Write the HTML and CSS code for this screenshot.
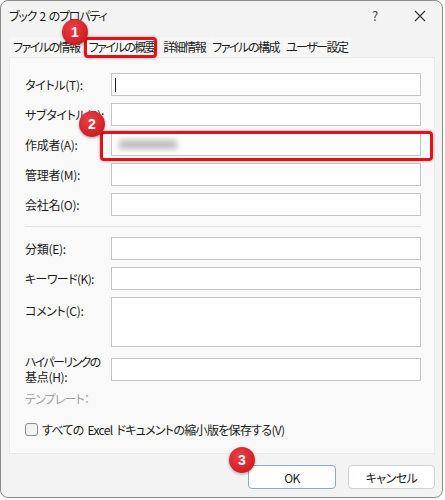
FILE: index.html
```html
<!DOCTYPE html>
<html lang="ja">
<head>
<meta charset="utf-8">
<link rel="stylesheet" href="styles.css">
</head>
<body>
<div class="window">
  <div class="titlebar">
    <span class="title">ブック 2 のプロパティ</span>
    <span class="help">?</span>
    <span class="close"><svg width="12" height="12" viewBox="0 0 12 12"><path d="M1 1 L11 11 M11 1 L1 11" stroke="#333" stroke-width="1.1" fill="none"/></svg></span>
  </div>
  <div class="tabs">
    <span class="tab">ファイルの情報</span>
    <span class="tab selected">ファイルの概要</span>
    <span class="tab">詳細情報</span>
    <span class="tab">ファイルの構成</span>
    <span class="tab">ユーザー設定</span>
  </div>
  <div class="panel">
    <div class="row"><label class="lbl">タイトル(T):</label><div class="field"><span class="caret"></span></div></div>
    <div class="row"><label class="lbl">サブタイトル(S):</label><div class="field"></div></div>
    <div class="row"><label class="lbl">作成者(A):</label><div class="field"><span class="blur"></span></div></div>
    <div class="row"><label class="lbl">管理者(M):</label><div class="field"></div></div>
    <div class="row"><label class="lbl">会社名(O):</label><div class="field"></div></div>
    <div class="sep"></div>
    <div class="row"><label class="lbl">分類(E):</label><div class="field"></div></div>
    <div class="row"><label class="lbl kana">キーワード(K):</label><div class="field"></div></div>
    <div class="row tall"><label class="lbl top">コメント(C):</label><div class="field"></div></div>
    <div class="row link"><label class="lbl two"><span class="narrow">ハイパーリンクの</span><br>基点(H):</label><div class="field"></div></div>
    <div class="template">テンプレート：</div>
    <div class="check"><span class="box"></span><span class="checktext">すべての Excel ドキュメントの縮小版を保存する(V)</span></div>
  </div>
  <div class="buttons">
    <button class="btn ok">OK</button>
    <button class="btn">キャンセル</button>
  </div>

  <div class="hl hl1"></div>
  <div class="hl hl2"></div>
  <div class="badge b1">1</div>
  <div class="badge b2">2</div>
  <div class="badge b3">3</div>
</div>
</body>
</html>
```
FILE: styles.css
```css
* { box-sizing: border-box; }
html, body { margin: 0; padding: 0; background: #ffffff; }
body {
  font-family: "Noto Sans CJK JP", "Noto Sans", sans-serif;
  font-size: 12px;
  color: #1b1b1b;
  font-feature-settings: "palt";
}
.window {
  position: relative;
  width: 443px;
  height: 498px;
  border: 1px solid #8c8c8c;
  border-radius: 8px;
  background: #f3f3f3;
}
.titlebar {
  height: 29px;
  display: flex;
  align-items: center;
  padding-left: 8px;
}
.title { flex: 1; font-size: 12px; letter-spacing: -1.2px; word-spacing: 2px; }
.help { width: 48px; text-align: center; color: #444; font-size: 13px; margin-right: -1px; }
.close { width: 44px; display: flex; justify-content: center; align-items: center; }
.tabs {
  margin-top: 7px;
  height: 20px;
  display: flex;
  padding-left: 9px;
}
.tab {
  height: 20px;
  line-height: 20px;
  padding: 0 3px 0 3px;
  margin-right: 1px;
  background: #f6f6f6;
  letter-spacing: -1.5px;
}
.tab.selected { background: #fafafa; padding: 0 4px 0 5px; }
.panel {
  margin-left: 8px;
  margin-right: 7px;
  height: 397px;
  background: #f9f9f9;
  border: 1px solid #e9e9e9;
  padding: 15px 13px 0 15px;
  display: flex;
  flex-direction: column;
}
.row {
  display: flex;
  align-items: center;
  height: 23px;
  margin-bottom: 7px;
}
.row.tall { height: 50px; align-items: flex-start; margin-bottom: 11px; }
.row.link { align-items: flex-start; margin-bottom: 0; }
.lbl { width: 86px; flex: none; white-space: nowrap; letter-spacing: -0.3px; }
.lbl.kana { letter-spacing: -0.6px; }
.lbl.top { margin-top: 5px; }
.lbl.two { line-height: 15px; margin-top: -4px; }
.narrow { letter-spacing: -1.6px; }
.field {
  flex: 1;
  height: 100%;
  background: #ffffff;
  border: 1px solid #c4c4c4;
  position: relative;
  display: flex;
  align-items: center;
  padding-left: 3px;
}
.caret { width: 1px; height: 14px; background: #222; }
.blur {
  width: 58px;
  height: 9px;
  background: #b8b8b8;
  filter: blur(3px);
  margin-left: 4px;
}
.sep {
  height: 1px;
  background: #e2e2e2;
  margin: 3px 0 10px 0;
}
.template {
  margin-top: 9px;
  color: #a3a3a3;
  height: 18px;
  line-height: 18px;
  letter-spacing: -0.8px;
}
.check {
  margin-top: 13px;
  display: flex;
  align-items: center;
  gap: 4px;
}
.checktext { letter-spacing: -0.7px; word-spacing: 2px; }
.box {
  width: 13px;
  height: 13px;
  border: 1px solid #8e8e8e;
  border-radius: 3px;
  background: #f2f2f2;
}
.buttons {
  display: flex;
  justify-content: flex-end;
  gap: 12px;
  margin-top: 11px;
  padding-right: 7px;
}
.btn {
  font-family: inherit;
  font-size: 12px;
  font-feature-settings: "palt";
  color: #1b1b1b;
  height: 24px;
  width: 87px;
  background: #ffffff;
  border: 1px solid #d2d2d2;
  border-radius: 4px;
  padding: 0;
  letter-spacing: -0.5px;
}
.btn.ok { width: 88px; border-color: #8eaac4; }
.hl {
  position: absolute;
  border: 3px solid #e0121c;
  border-radius: 4px;
  box-shadow: 0 0 3px rgba(120,0,0,0.45);
}
.hl1 { left: 83px; top: 36px; width: 73px; height: 21px; }
.hl2 { left: 99px; top: 130px; width: 333px; height: 30px; }
.badge {
  position: absolute;
  width: 26px;
  height: 26px;
  border-radius: 50%;
  background: radial-gradient(circle at 40% 35%, #ec4045, #cf1f26 70%);
  color: #ffffff;
  font-family: "Liberation Sans", sans-serif;
  font-weight: bold;
  font-size: 14px;
  line-height: 26px;
  text-align: center;
  box-shadow: 0 1px 3px rgba(0,0,0,0.35);
}
.b1 { left: 61px; top: 18px; }
.b2 { left: 78px; top: 110px; }
.b3 { left: 228px; top: 446px; }
```
